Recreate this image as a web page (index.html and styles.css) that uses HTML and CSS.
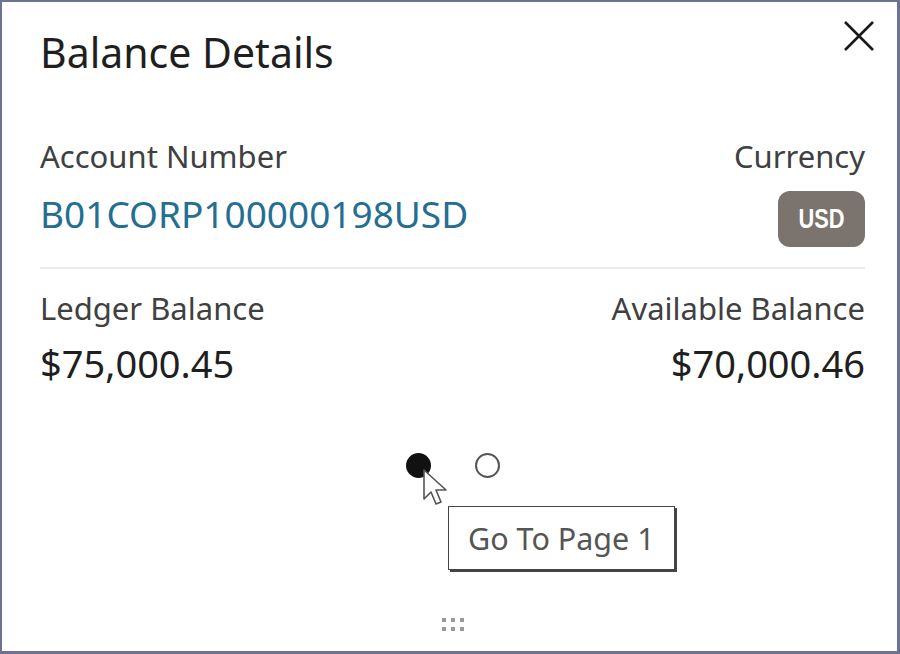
FILE: index.html
```html
<!DOCTYPE html>
<html lang="en">
<head>
    <meta charset="UTF-8">
    <title>Balance Details</title>
    <link rel="stylesheet" href="styles.css">
</head>
<body>

    <div class="dialog">
        <!-- Header -->
        <div class="dialog-header">
            <h1>Balance Details</h1>
            <button class="close-btn" aria-label="Close">
                <svg width="34" height="34" viewBox="0 0 34 34">
                    <path d="M3 3 L31 31 M31 3 L3 31" stroke="#1a1a1a" stroke-width="2.6" fill="none"/>
                </svg>
            </button>
        </div>

        <!-- Account row -->
        <div class="info-row">
            <div class="field">
                <div class="label">Account Number</div>
                <div class="value link">B01CORP100000198USD</div>
            </div>
            <div class="field right">
                <div class="label">Currency</div>
                <span class="badge"><span class="badge-text">USD</span></span>
            </div>
        </div>

        <hr class="divider">

        <!-- Balance row -->
        <div class="info-row">
            <div class="field">
                <div class="label">Ledger Balance</div>
                <div class="value amount">$75,000.45</div>
            </div>
            <div class="field right">
                <div class="label">Available Balance</div>
                <div class="value amount">$70,000.46</div>
            </div>
        </div>

        <!-- Paging dots -->
        <div class="pager">
            <span class="dot active"></span>
            <span class="dot"></span>
            <svg class="cursor" width="28" height="40" viewBox="0 0 28 40">
                <path d="M2 2 L2 31 L9 24 L14 36 L19 34 L14 22 L24 22 Z" fill="#fff" stroke="#555" stroke-width="1.6" stroke-linejoin="round"/>
            </svg>
            <div class="tooltip">Go To Page 1</div>
        </div>

        <!-- Drag handle -->
        <div class="handle">
            <span></span><span></span><span></span>
            <span></span><span></span><span></span>
        </div>
    </div>

</body>
</html>
```

FILE: styles.css
```css
html, body {
    margin: 0;
    height: 100%;
}
body {
    font-family: "Noto Sans", "Open Sans", sans-serif;
    color: #161513;
    background-color: #fff;
}
.dialog {
    box-sizing: border-box;
    width: 900px;
    height: 654px;
    border: 2px solid #6d7193;
    border-right-width: 3px;
    border-bottom-width: 3px;
    padding: 0 32px 0 38px;
    display: flex;
    flex-direction: column;
}
.dialog-header {
    display: flex;
    justify-content: space-between;
    align-items: flex-start;
    height: 134px;
}
h1 {
    margin: 22px 0 0;
    font-size: 41px;
    font-weight: 400;
    color: #1f1f1f;
}
.close-btn {
    margin: 17px -11px 0 0;
    padding: 0;
    border: none;
    background: none;
    cursor: pointer;
}
.info-row {
    display: flex;
    justify-content: space-between;
}
.field {
    display: flex;
    flex-direction: column;
    align-items: flex-start;
}
.field.right {
    align-items: flex-end;
}
.label {
    font-size: 31px;
    line-height: 40px;
    color: #404040;
}
.value {
    font-size: 37px;
    line-height: 52px;
    margin-top: 12px;
    color: #1f1f1f;
}
.value.link {
    color: #256e93;
}
.value.amount {
    font-size: 38px;
    margin-top: 9px;
}
.badge {
    box-sizing: border-box;
    display: flex;
    align-items: center;
    justify-content: center;
    width: 87px;
    height: 56px;
    margin-top: 15px;
    background-color: #7a736e;
    border-radius: 12px;
}
.badge-text {
    color: #fff;
    font-family: "Liberation Sans", Arial, sans-serif;
    font-weight: 700;
    font-size: 28px;
    transform: scaleX(0.78);
}
.divider {
    width: 100%;
    margin: 20px 0 19px;
    border: none;
    border-top: 2px solid #ebebeb;
}
.pager {
    position: relative;
    display: flex;
    justify-content: center;
    gap: 44px;
    margin-top: 64px;
}
.dot {
    box-sizing: border-box;
    width: 25px;
    height: 25px;
    border-radius: 50%;
    border: 2px solid #555;
    background-color: #fff;
}
.dot.active {
    background-color: #111;
    border-color: #111;
}
.cursor {
    position: absolute;
    left: 382px;
    top: 15px;
}
.tooltip {
    position: absolute;
    left: 408px;
    top: 53px;
    border: 1px solid #444;
    box-shadow: 2px 2px 0 #444;
    background-color: #fff;
    padding: 0 19px;
    font-size: 30.5px;
    line-height: 62px;
    color: #555;
    white-space: nowrap;
}
.handle {
    margin: auto auto 20px;
    display: grid;
    grid-template-columns: repeat(3, 4px);
    gap: 5px 5px;
}
.handle span {
    width: 4px;
    height: 4px;
    background-color: #999;
}
```
